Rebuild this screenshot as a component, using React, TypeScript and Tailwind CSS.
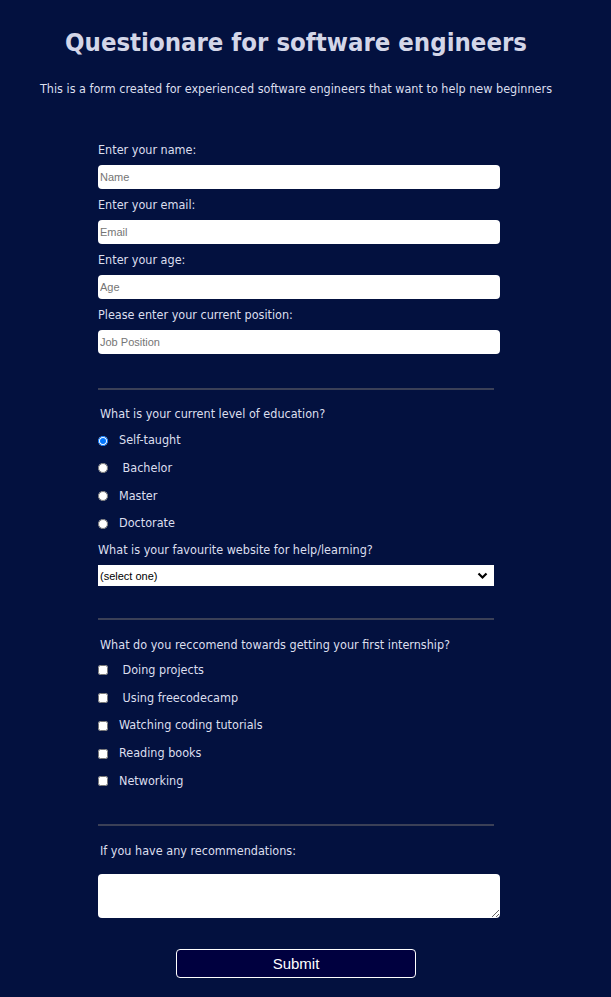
import React from 'react';

const font = "font-['DejaVu_Sans_Condensed','DejaVu_Sans',sans-serif]";

const TextField = ({ label, placeholder, type = 'text' }: { label: string; placeholder: string; type?: string }) => (
  <div className="flex flex-col">
    <label className="text-[12.5px] leading-[16px] text-[#dcdfee]">{label}</label>
    <input
      type={type}
      placeholder={placeholder}
      className="mt-[7px] mb-[8px] h-[24px] w-[402px] rounded-[4px] bg-white px-[2px] text-[11px] text-black placeholder:text-[#757575] font-['Liberation_Sans',Arial,sans-serif] outline-none"
    />
  </div>
);

const Divider = () => <hr className="w-[396px] border-0 border-t-2 border-[#3b4057]" />;

const App = () => {
  const education = ['Self-taught', ' Bachelor', 'Master', 'Doctorate'];
  const tips = [' Doing projects', ' Using freecodecamp', 'Watching coding tutorials', 'Reading books', 'Networking'];

  return (
    <div className={`min-h-[997px] bg-[#03113f] ${font} text-[#dcdfee]`}>
      <h1 className="pt-[25px] pr-[19px] text-center text-[25.5px] font-bold leading-[34px] text-[#d3d6e8]">
        Questionare for software engineers
      </h1>
      <p className="mt-[22px] pr-[19px] text-center text-[12.5px] leading-[16px]">
        This is a form created for experienced software engineers that want to help new beginners
      </p>

      <form className="ml-[98px] mt-[45px] w-[402px]" onSubmit={(e) => e.preventDefault()}>
        <TextField label="Enter your name:" placeholder="Name" />
        <TextField label="Enter your email:" placeholder="Email" type="email" />
        <TextField label="Enter your age:" placeholder="Age" type="number" />
        <TextField label="Please enter your current position:" placeholder="Job Position" />

        <div className="mt-[26px]">
          <Divider />
        </div>

        <p className="ml-[2px] mt-[16px] text-[12.5px] leading-[16px]">What is your current level of education?</p>
        <div className="mt-[5px] flex flex-col">
          {education.map((item, i) => (
            <label key={item} className="flex h-[27.6px] items-center text-[12.5px] whitespace-pre">
              <input type="radio" name="education" defaultChecked={i === 0} className="m-0 h-[10px] w-[10px]" />
              <span className="ml-[11px]">{item}</span>
            </label>
          ))}
        </div>

        <p className="mt-[5px] text-[12.5px] leading-[16px]">What is your favourite website for help/learning?</p>
        <div className="relative mt-[7px] h-[21px] w-[396px]">
          <select className="block h-[21px] w-full appearance-none bg-white pl-[2px] text-[11px] text-black font-['Liberation_Sans',Arial,sans-serif] outline-none">
            <option>(select one)</option>
            <option>Stack Overflow</option>
            <option>freeCodeCamp</option>
            <option>MDN</option>
          </select>
          <svg className="pointer-events-none absolute right-[6px] top-1/2 -translate-y-1/2" width="11" height="8" viewBox="0 0 11 8">
            <path d="M1.5 1.5 L5.5 5.5 L9.5 1.5" fill="none" stroke="#000" strokeWidth="2.2" />
          </svg>
        </div>

        <div className="mt-[32px]">
          <Divider />
        </div>

        <p className="ml-[2px] mt-[17px] text-[12.5px] leading-[16px]">What do you reccomend towards getting your first internship?</p>
        <div className="mt-[3px] flex flex-col">
          {tips.map((item) => (
            <label key={item} className="flex h-[27.8px] items-center text-[12.5px] whitespace-pre">
              <input type="checkbox" className="m-0 h-[10px] w-[10px] accent-white" />
              <span className="ml-[11px]">{item}</span>
            </label>
          ))}
        </div>

        <div className="mt-[29px]">
          <Divider />
        </div>

        <p className="ml-[2px] mt-[17px] text-[12.5px] leading-[16px]">If you have any recommendations:</p>
        <textarea className="mt-[15px] block h-[44px] w-[402px] rounded-[4px] bg-white text-black outline-none" />

        <div className="mt-[31px] flex">
          <button
            type="submit"
            className="ml-[78px] h-[29px] w-[240px] rounded-[4px] border border-white bg-[#00003f] text-[15px] text-white font-['Liberation_Sans',Arial,sans-serif]"
          >
            Submit
          </button>
        </div>
      </form>
    </div>
  );
};

export default App;
